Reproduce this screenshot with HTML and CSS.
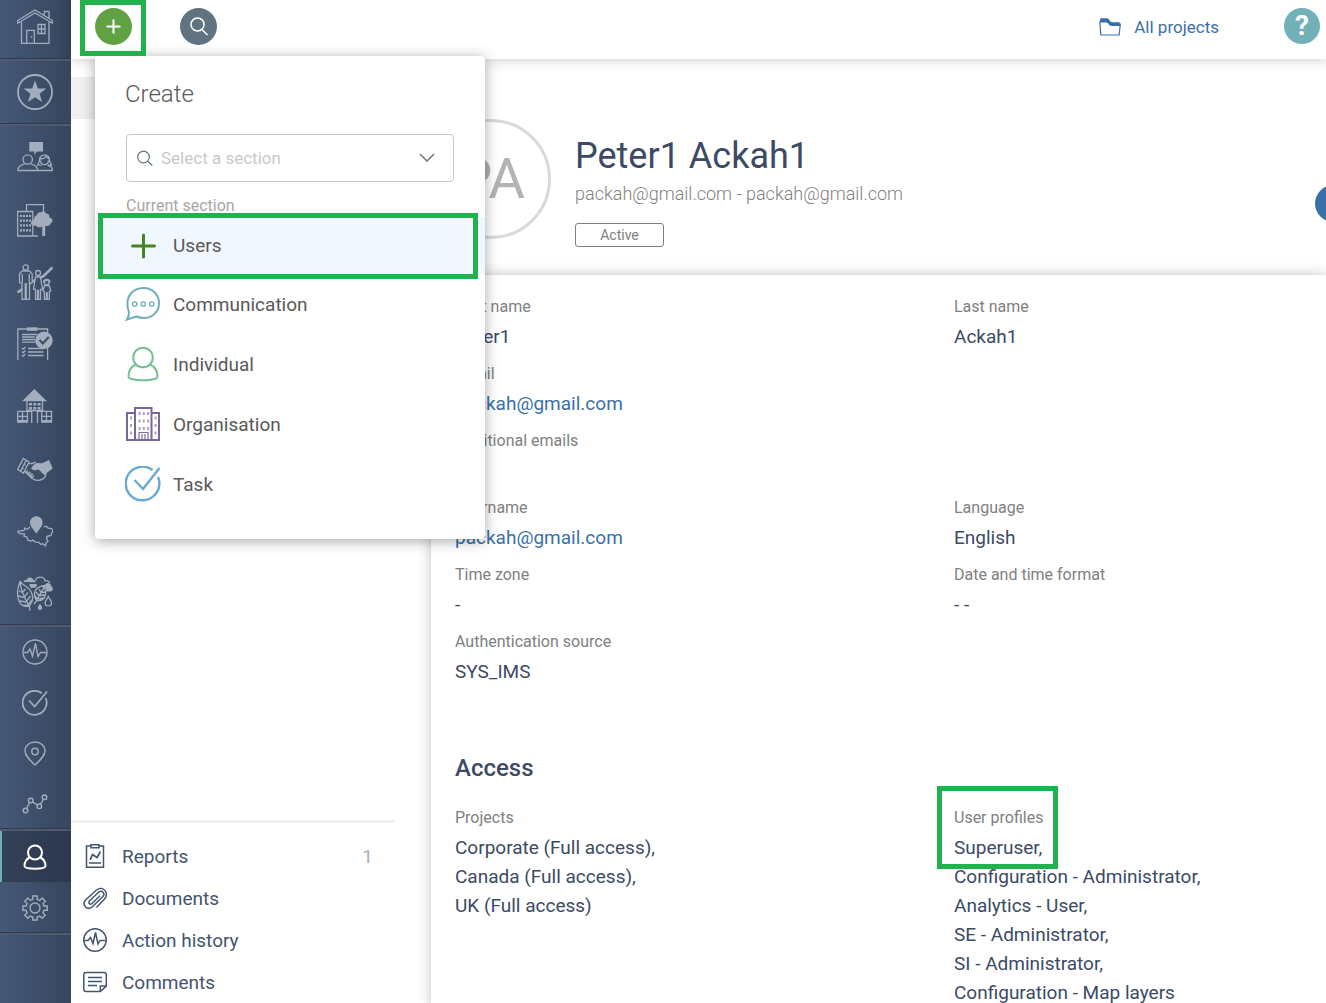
FILE: index.html
```html
<!DOCTYPE html>
<html lang="en">
<head>
    <meta charset="UTF-8">
    <meta name="viewport" content="width=device-width, initial-scale=1.0">
    <title>Peter1 Ackah1</title>
    <link rel="stylesheet" href="styles.css">
</head>
<body>
    <nav class="sidebar">
        <div class="nav-group home">
            <a href="#" aria-label="Home">
                <svg class="icon" viewBox="0 0 36 36">
                    <path d="M.7 12.5 18 2l17.3 10.5v2.7L18 5 .7 15.2zM4.5 14v21.3H32V14M27.3 7V3.500H32V10M9.7 35V22.300h7.600V35M14.500 28v1.500"/>
                    <path d="M21 16.500h7v9h-7zM24.500 16.500v9M21 21h7"/>
                </svg>
            </a>
        </div>
        <div class="nav-group favourites">
            <a href="#" aria-label="Favourites">
                <svg class="icon" viewBox="0 0 36 36">
                    <circle cx="18" cy="18" r="17" stroke-width="1.8"/>
                    <path class="solid" d="m18 6.500 2.900 7.900 8.400.2-6.700 5.200 2.500 8.200-7.100-4.800-7.100 4.800 2.500-8.200-6.700-5.200 8.400-.2z"/>
                </svg>
            </a>
        </div>
        <div class="nav-group sections">
            <a href="#" aria-label="Consultations">
                <svg class="icon" viewBox="0 0 36 36">
                    <path class="solid" d="M12.300 3H26v9.500h-6L17.300 16v-3.500h-5z"/>
                    <circle cx="10.700" cy="20.500" r="4.700"/>
                    <path d="M.5 31.500h35M.7 31.500c.2-4.500 3-5.500 6.800-6.300M14 25.200c3.800.8 6.500 2 6.800 6.300M22.500 21c0-6.500 10-6.500 10 0M23 20c3 0 5-1 6.500-2.500 1 1.500 2 2.300 3 2.500M23.500 21.500c.5 5.500 7.500 5.500 8 0M22.500 21c0 2-1 3.500-2 5l4 .2M32.500 21c0 2 1 3.500 2 5l-4 .2M31 26.500c3 .6 4.500 2 4.500 5"/>
                </svg>
            </a>
            <a href="#" aria-label="Environment">
                <svg class="icon" viewBox="0 0 36 36">
                    <path d="M9.500 9.500V2.700h17v7M.6 9.500h15.200V34H.6zM.6 34H21"/>
                    <path d="M3 14h11M3 18.600h11M3 23.300h11M3 28.300h11" stroke-width="2.2" stroke-dasharray="2 1"/>
                    <path class="solid" d="M20 13c0-2.500 2.800-3.200 4.200-2.500 1.200-2.500 4.800-1.200 4.600 1 2.800-.5 4 2 3.500 4 3.800.5 4.300 4.500 1.500 5.600-.5 2.800-3.500 3.600-5.600 2.600V34h-3V24.500c-2 1.500-5.500 1-6-1-3 .7-5.600-.8-5.200-3 .3-1.700 1.800-2.300 3-2.200-.2-2.800 1.200-4.800 3-5.300z"/>
                </svg>
            </a>
            <a href="#" aria-label="Community">
                <svg class="icon" viewBox="0 0 36 36">
                    <path d="M.5 28.500 14 18.800M14.500 18l11.500-5.500L35.500 3.500" stroke-width="2.6"/>
                    <g class="cutout">
                        <circle cx="8.700" cy="3.500" r="2.600"/>
                        <path d="M5 7h7.500l2.700 3v8.500l-2.700 1V35.300H9.300V20H8.200v15.300H5V19.500l-2.500-1V10z"/>
                        <circle cx="21" cy="9" r="2.500"/>
                        <path d="M18.500 13h5l1.500 9 .5 3-2 .5v10h-2v-9h-1v9h-2v-10l-2-.5.500-3z"/>
                        <circle cx="29.700" cy="18.500" r="2.300"/>
                        <path d="M27.500 21.700h4.700l1.600 5-1.500 1v7.600h-2V29h-1v6.300h-2v-7.600l-1.400-1z"/>
                    </g>
                    <path d="M26.500 18.500c0-4 6.500-4 6.500 0M5.300 10v9M12.200 10v9"/>
                </svg>
            </a>
            <a href="#" aria-label="Compliance">
                <svg class="icon" viewBox="0 0 36 36">
                    <path d="M.8 34V3h29.800v31"/>
                    <path class="solid" d="M10 1.300h10.500v3.500H10z"/>
                    <path d="M5 8.500h15M5 11h13M5 13.500h13M5 16.200h14M11 22.500h15.500M11 26h15.500M11 29.500h15.500M5 22l1.200 1.200L8.500 21M5 25.500l1.200 1.200L8.500 24.500M5 29l1.200 1.200L8.500 28"/>
                    <circle class="solid" cx="27" cy="14.300" r="8.700"/>
                    <path class="dark" d="m22.500 14 3.300 3.500 6-6.500"/>
                </svg>
            </a>
            <a href="#" aria-label="Resettlement">
                <svg class="icon" viewBox="0 0 36 36">
                    <path class="solid" d="M17.300 0 30 12.300H5z"/>
                    <path d="M10 12v9.500h15.500V12M.7 22.300h14V34M.7 22.300V33h9.800V22.300M20.500 34V22.300h14V33h-9.800V22.300"/>
                    <path d="M1 27.300h9.500M5.500 22.300v10M24.500 27.300h10M29.500 22.300v10"/>
                    <path d="M12 15.300h12M12 19.300h12" stroke-width="2.6" stroke-dasharray="3 1.300"/>
                    <path d="M1 32h9M25 32h9.500" stroke-width="2"/>
                </svg>
            </a>
            <a href="#" aria-label="Agreements">
                <svg class="icon" viewBox="0 0 36 36">
                    <path d="M6.300 7.500 12 11 6.500 22 .6 18.500zM9 9.500 3.700 20M7 13.500l1.500 1M5 17l1.500 1M12 12.500c2.500.8 4.500-.5 7-1.500M8 20.500l7 7M11 19.500c-1.500 1-2.500 2.500-1 3.300l1.500-1.700M13.500 21c-1.500 1-2.500 3-1 3.500l2-2M16 23c-1.500 1-2.500 3-1 3.800l2-2M15.500 27.500c3 2.500 5 2 7.500 1.500 3-.5 5-2 6-5.500"/>
                    <path class="solid" d="M14 17.500c2-3 3.500-5 6-5.500l5 .3 7-3.300 3.700 8.500-5.500 4-2 3c-2-1-4-4-6.500-6-2.500 1-5 1.500-7.700-1z"/>
                </svg>
            </a>
            <a href="#" aria-label="Territories">
                <svg class="icon" viewBox="0 0 36 36">
                    <path class="solid" d="M19.300 20.500c-3-4.500-6.300-7-6.300-11a6.300 6.300 0 0 1 12.600 0c0 4-3.300 6.500-6.300 11z"/>
                    <path d="m13 14-3 2.500-2-1.500-1 2.500-6.400.8 1.500 2 5.400.8-.5 2 3 1 1 3 3.500 1 1-1 3.500 2 3 .2 1.500 2 2-.5 3 2 .5-3 2-1.500-1.500-3 .5-2 4-.8.500-2 1.700-3-1.500-2-3.500-.3-2-2-2.500.8"/>
                </svg>
            </a>
            <a href="#" aria-label="Biodiversity">
                <svg class="icon" viewBox="0 0 36 36">
                    <path d="M3 5.500C.5 12-.5 20 2.500 26c2 4 6 5 9.800 4C16.500 25 16.500 19 13 14 10.500 10.500 6 9.500 3 5.500zM3 6c1 10 5 17 9.300 24l.8 4.700M2 15l3.500 1.500L8.500 13M1.500 20l5.500 1.500 4-5M2.500 25l6.500 1 4.500-6M6 29.500l5-.5 3.700-5"/>
                    <path d="M28 9.500c-5 .5-10 3-10.500 8-.3 3 .5 5 2.500 7 4.500.5 7.500-2 8.500-6 .7-3.500-1.500-5.500-.5-9zM27.500 10c-2 5-6 10-7.500 14l-3 4M19 16l3 3.500 5.500-.5M22 13l2 3.500 4-.5M18 20l2.500 3 5.500-1"/>
                    <path class="solid" d="M6.500 6c.5-2 2-2.300 3-2 1-3.500 6-3.500 7 0 1.500 0 2.300 1 2 2.300zM28 10c0-4 6-4 6 0 2.500 1 2.500 5-.3 5.500H29c1-2-.5-3-1-5.500zM12 8h8l-1 3.500-5 .5z"/>
                    <path d="M18.500 4.500c1-4.500 9-4.500 9.500.5 2-1 4 0 4.500 2"/>
                    <path class="solid" d="M23 27.500c1 2 2.200 3 2.200 4.300a2.200 2.200 0 0 1-4.400 0c0-1.300 1.200-2.300 2.200-4.300z"/>
                    <path d="M31.300 20.500c1.500 3 3.200 4.500 3.200 6.200a3.200 3.200 0 0 1-6.400 0c0-1.700 1.700-3.200 3.200-6.200z"/>
                </svg>
            </a>
        </div>
        <div class="nav-group tools">
            <a href="#" aria-label="Actions">
                <svg class="icon small" viewBox="0 0 26 26">
                    <circle cx="13" cy="13" r="12"/>
                    <path d="M2 13.500h3.500L8 10l2.500 7 3-12.500 2.500 13 2.500-4H24"/>
                </svg>
            </a>
            <a href="#" aria-label="Tasks">
                <svg class="icon small" viewBox="0 0 26 26">
                    <path d="M19.800 3.200A12 12 0 1 0 23.600 8M7 10.500l5.700 6L25 1.500" stroke-width="1.8"/>
                </svg>
            </a>
            <a href="#" aria-label="Locations">
                <svg class="icon small" viewBox="0 0 26 26">
                    <path d="M13 25C8 20.500 3 16 3 10.800 3 5.500 7.500 2 13 2s10 3.500 10 8.800C23 16 18 20.500 13 25z"/>
                    <circle cx="13" cy="11.500" r="3.200"/>
                </svg>
            </a>
            <a href="#" aria-label="Analytics">
                <svg class="icon small" viewBox="0 0 26 26">
                    <circle cx="3.500" cy="19.500" r="2.300"/>
                    <circle cx="8.700" cy="9.500" r="2.300"/>
                    <circle cx="17.300" cy="15.300" r="2.300"/>
                    <circle cx="22.500" cy="6.300" r="2.300"/>
                    <path d="m4.600 17.500 3-6M10.700 10.800l4.700 3.200M18.500 13.300l2.900-5"/>
                </svg>
            </a>
        </div>
        <div class="nav-group admin">
            <a href="#" class="active" aria-label="Users">
                <svg class="icon small" viewBox="0 0 26 26">
                    <circle cx="13" cy="8.500" r="7"/>
                    <path d="M7.800 13.500C4.500 15 2.500 18 2.500 22c0 3.500 21 3.500 21 0 0-4-2-7-5.300-8.500"/>
                </svg>
            </a>
            <a href="#" aria-label="Settings">
                <svg class="icon small" viewBox="0 0 26 26">
                    <circle cx="13" cy="13" r="5"/>
                    <path d="M10.800 1h4.400v3.300l2.600 1.100 2.400-2.300 3.100 3.100L21 8.600l1 2.400h3.200v4.300H22l-1.100 2.600 2.300 2.300-3.100 3.100-2.300-2.300-2.600 1V25h-4.400v-3L8.200 21l-2.300 2.300-3.100-3.100 2.300-2.300L4 15.300H.9V11H4l1.100-2.400-2.300-2.400 3.100-3.100 2.300 2.300 2.600-1.100z"/>
                </svg>
            </a>
        </div>
    </nav>

    <div class="page">
        <header class="topbar">
            <div class="create">
                <button class="round add" aria-label="Create">
                    <svg viewBox="0 0 37 37"><path d="M11.500 18.500h14M18.500 11.500v14"/></svg>
                </button>

                <!-- Create menu, opened by the plus button -->
                <div class="create-menu">
                    <h2>Create</h2>
                    <div class="section-select">
                        <svg class="lens" viewBox="0 0 16 16"><circle cx="6.500" cy="7" r="5.800"/><path d="m10.700 11.200 4.600 4.300"/></svg>
                        <input type="text" aria-label="Select a section" placeholder="Select a section">
                        <button class="chevron" aria-label="Show sections">
                            <svg viewBox="0 0 16 10"><path d="m1 1 7 7 7-7"/></svg>
                        </button>
                    </div>
                    <p class="caption">Current section</p>
                    <ul>
                        <li class="current">
                            <a href="#">
                                <svg class="users" viewBox="0 0 36 36"><path d="M7.500 18h22M18.500 7v22"/></svg>
                                Users
                            </a>
                        </li>
                        <li>
                            <a href="#">
                                <svg class="communication" viewBox="0 0 36 36">
                                    <path d="M2 33.500c2-3.500 2.500-6 1.500-9C-.5 11 7.500 2 18.500 2 28 2 34 9 34 17.300c0 12-12 17.500-22.500 13.200z"/>
                                    <g stroke-width="1.3"><circle cx="9.700" cy="18" r="2.200"/><circle cx="18.300" cy="18" r="2.200"/><circle cx="26.700" cy="18" r="2.200"/></g>
                                </svg>
                                Communication
                            </a>
                        </li>
                        <li>
                            <a href="#">
                                <svg class="individual" viewBox="0 0 36 36">
                                    <circle cx="18" cy="11.500" r="9.800"/>
                                    <path d="M11 18.500C6.500 20.500 3.500 25 3.500 30.500c0 5 29 5 29 0 0-5.500-3-10-7.500-12"/>
                                </svg>
                                Individual
                            </a>
                        </li>
                        <li>
                            <a href="#">
                                <svg class="organisation" viewBox="0 0 36 36">
                                    <path d="M2 7h8v27H2zM26.500 7H34v27h-7.500zM10 2h16.500v32H10z"/>
                                    <path d="M14 26.500h9V34M14 26.500V34M17 28v6M20 28v6" stroke-width="1.2"/>
                                    <path d="M13.500 7.500h11M13.500 15h11M13.500 22.500h11M5 12h2M5 19.500h2M5 27h2M29.500 12h2M29.500 19.500h2M29.500 27h2" stroke-width="3" stroke-dasharray="2 2.300" opacity=".6"/>
                                </svg>
                                Organisation
                            </a>
                        </li>
                        <li>
                            <a href="#">
                                <svg class="task" viewBox="0 0 36 36">
                                    <path d="M27.500 4A16.800 16.800 0 1 0 33 11M9.500 14l8.500 9L34.500 2"/>
                                </svg>
                                Task
                            </a>
                        </li>
                    </ul>
                </div>
            </div>
            <button class="round search" aria-label="Search">
                <svg viewBox="0 0 37 37"><circle cx="17.500" cy="16.500" r="6.500"/><path d="m22 21.500 5.500 5.500"/></svg>
            </button>
            <a href="#" class="projects">
                <svg viewBox="0 0 22 18">
                    <path d="M.8 3.500 1.800 17h18.400l1.100-11.500"/>
                    <path class="fill" d="M1.500.3h6.800c2 0 2.500 4 5 4h7.200l1.200 3.700h-8.500C9.500 8 9.500 4.500 7.500 4.500H.7z"/>
                </svg>
                All projects
            </a>
            <button class="round help" aria-label="Help">?</button>
        </header>

        <div class="content">
            <aside class="panel">
                <div class="panel-tab"></div>
                <ul class="panel-links">
                    <li>
                        <a href="#">
                            <svg viewBox="0 0 24 24"><path d="M8 2H3.500v21.300h17V2H16M8 .8h8v3H8zM6 19h12"/><path d="m7.500 15 2-4.500 4.500 3L17 8.500" stroke-width="1.8"/><path d="M6.700 15.200h1.500M16.300 8h1.500"/></svg>
                            Reports
                            <span class="count">1</span>
                        </a>
                    </li>
                    <li>
                        <a href="#">
                            <svg viewBox="0 0 24 24"><path d="m13.500 21.500 8-8.500c5-6-1.500-14-8-9L2.500 14C-1.500 18.500 4 25 9 21L20 10.500c2.500-3-1-7-4.500-4.200L6.500 15c-1.700 2.200.8 4 2.500 2.500L17 9.800"/></svg>
                            Documents
                        </a>
                    </li>
                    <li>
                        <a href="#">
                            <svg viewBox="0 0 24 24"><circle cx="12" cy="12" r="11.200"/><path d="M1.500 12.500H5L7.500 9.500l2.500 6L12.500 4.500 15 16l2-3.500h5.500"/></svg>
                            Action history
                        </a>
                    </li>
                    <li>
                        <a href="#">
                            <svg viewBox="0 0 24 24"><path d="M3 2.500h18c1.500 0 2.300 1 2.300 2.300V16l-6 5.500H3C1.500 21.500.8 20.500.8 19.200V4.800C.8 3.500 1.500 2.500 3 2.500zM17.300 21.500V16h6M5 7.500h14M5 11.500h14M5 15.500h9"/></svg>
                            Comments
                        </a>
                    </li>
                </ul>
            </aside>

            <main>
                <section class="profile">
                    <div class="avatar">PA</div>
                    <div class="profile-text">
                        <h1>Peter1 Ackah1</h1>
                        <p>packah@gmail.com - packah@gmail.com</p>
                        <span class="badge">Active</span>
                    </div>
                    <button class="round edit" aria-label="Edit"></button>
                </section>

                <section class="card">
                    <div class="fields">
                        <div class="field left">
                            <div class="label">First name</div>
                            <div class="value">Peter1</div>
                        </div>
                        <div class="field">
                            <div class="label">Last name</div>
                            <div class="value">Ackah1</div>
                        </div>
                        <div class="field left">
                            <div class="label">Email</div>
                            <div class="value"><a href="#">packah@gmail.com</a></div>
                        </div>
                        <div class="field left">
                            <div class="label">Additional emails</div>
                            <div class="value"></div>
                        </div>
                        <div class="field left">
                            <div class="label">Username</div>
                            <div class="value"><a href="#">packah@gmail.com</a></div>
                        </div>
                        <div class="field">
                            <div class="label">Language</div>
                            <div class="value">English</div>
                        </div>
                        <div class="field left">
                            <div class="label">Time zone</div>
                            <div class="value">-</div>
                        </div>
                        <div class="field">
                            <div class="label">Date and time format</div>
                            <div class="value">- -</div>
                        </div>
                        <div class="field left">
                            <div class="label">Authentication source</div>
                            <div class="value">SYS_IMS</div>
                        </div>
                    </div>

                    <h3>Access</h3>
                    <div class="fields">
                        <div class="field left">
                            <div class="label">Projects</div>
                            <div class="value">Corporate (Full access),<br>Canada (Full access),<br>UK (Full access)</div>
                        </div>
                        <div class="field profiles">
                            <div class="label">User profiles</div>
                            <div class="value">Superuser,<br>Configuration - Administrator,<br>Analytics - User,<br>SE - Administrator,<br>SI - Administrator,<br>Configuration - Map layers</div>
                        </div>
                    </div>
                </section>
            </main>
        </div>
    </div>
</body>
</html>
```

FILE: styles.css
```css
*,
*::after {
    box-sizing: border-box;
}

body {
    margin: 0;
    height: 100vh;
    display: flex;
    overflow: hidden;
    background: #fff;
    color: #3b4a65;
    font-family: Roboto, "Liberation Sans", sans-serif;
    font-size: 19px;
}

h1, h2, h3, p, ul {
    margin: 0;
    padding: 0;
}

ul {
    list-style: none;
}

a {
    color: #3970a8;
    text-decoration: none;
}

button {
    padding: 0;
    border: none;
    background: none;
    cursor: pointer;
}

svg {
    display: block;
    flex: none;
    fill: none;
    stroke: currentColor;
    stroke-width: 1.5;
}

/* Sidebar */
.sidebar {
    flex: 0 0 71px;
    background: linear-gradient(to right, #465877, #36465e);
}

.nav-group {
    display: flex;
    flex-direction: column;
    border-bottom: 2px solid #4f5a6c;
    box-shadow: inset 0 -1px 0 #2f3b50;
}

.nav-group a {
    flex: 1;
    display: flex;
    align-items: center;
    justify-content: center;
    padding-right: 1px;
    color: #a3adbc;
}

.home {
    height: 61px;
    padding-bottom: 7px;
}

.favourites {
    height: 65px;
    padding-bottom: 1px;
}

.sections {
    height: 501px;
}

.tools {
    height: 204px;
}

.admin {
    height: 104px;
}

.nav-group a.active {
    background: linear-gradient(to right, #344157, #2d384e);
    box-shadow: inset 2px 0 0 #6fb0b8;
    color: #fff;
}

.icon {
    width: 36px;
    height: 36px;
    stroke-width: 1.3;
}

.icon.small {
    width: 26px;
    height: 26px;
    stroke-width: 1.4;
}

.active .icon.small {
    stroke-width: 2;
}

.solid {
    fill: currentColor;
    stroke: none;
}

.cutout {
    fill: #3f506c;
}

.dark {
    stroke: #3f4f6a;
    stroke-width: 2.2;
}

/* Top bar */
.page {
    flex: 1;
    min-width: 0;
    display: flex;
    flex-direction: column;
}

.topbar {
    position: relative;
    z-index: 2;
    flex: none;
    height: 59px;
    display: flex;
    align-items: center;
    padding: 0 6px 6px 24px;
    background: #fff;
    box-shadow: 0 1px 12px rgba(0, 0, 0, 0.2);
}

.round {
    flex: none;
    display: block;
    width: 37px;
    height: 37px;
    border-radius: 50%;
    color: #fff;
}

.add {
    background: #5fa143;
}

.add svg {
    stroke-width: 2;
}

.search {
    margin-left: 48px;
    background: #5f7480;
}

.projects {
    display: flex;
    align-items: center;
    gap: 13px;
    margin-left: auto;
    font-size: 17px;
}

.projects svg {
    width: 22px;
    height: 18px;
    stroke-width: 1.2;
}

.projects .fill {
    fill: currentColor;
    stroke: none;
}

.help {
    width: 36px;
    height: 36px;
    margin: 0 0 2px 65px;
    background: #72b0b8;
    font: 700 28px/36px Roboto, sans-serif;
}

/* Create menu */
.create {
    position: relative;
}

.create::after,
.current::after,
.profiles::after {
    content: "";
    position: absolute;
    border: 5px solid #22b14c;
    pointer-events: none;
}

.create::after {
    top: -8px;
    left: -15px;
    width: 66px;
    height: 56px;
}

.create-menu {
    position: absolute;
    top: 48px;
    left: 0;
    width: 390px;
    padding: 20px 0 25px;
    background: #fff;
    border-radius: 4px;
    box-shadow: 0 2px 14px rgba(0, 0, 0, 0.35);
    color: #595959;
}

.create-menu h2 {
    padding-left: 30px;
    font-size: 24px;
    font-weight: 300;
    line-height: 36px;
}

.section-select {
    display: flex;
    align-items: center;
    height: 48px;
    margin: 22px 31px 0;
    padding: 0 18px 0 10px;
    border: 1px solid #c8c8c8;
    border-radius: 4px;
}

.lens {
    width: 16px;
    height: 16px;
    color: #5f7480;
    stroke-width: 1.2;
}

.section-select input {
    flex: 1;
    min-width: 0;
    padding: 0 8px;
    border: none;
    outline: none;
    background: none;
    font: 17px/24px Roboto, sans-serif;
}

.section-select input::placeholder {
    color: #c8c8c8;
}

.chevron svg {
    width: 16px;
    height: 10px;
    color: #808080;
    stroke-width: 1.7;
}

.caption {
    padding: 12px 31px 0;
    color: #a6a6a6;
    font-size: 16px;
    line-height: 23px;
}

.create-menu li {
    position: relative;
    height: 60px;
}

.create-menu li a {
    height: 100%;
    display: flex;
    align-items: center;
    gap: 12px;
    padding-left: 30px;
    color: #595959;
}

.create-menu li svg {
    width: 36px;
    height: 36px;
    stroke-width: 2;
}

.create-menu .current {
    height: 57px;
    background: #f0f7ff;
}

.current::after {
    top: -4px;
    left: 3px;
    right: 7px;
    height: 66px;
    z-index: 1;
}

.create-menu li .users {
    color: #43861f;
    stroke-width: 3;
    stroke-linecap: round;
}

.communication {
    color: #6fafb9;
}

.individual {
    color: #76c095;
}

.organisation {
    color: #78689a;
}

.create-menu li .task {
    color: #6aa8d4;
    stroke-width: 2.4;
}

/* Left panel */
.content {
    flex: 1;
    min-height: 0;
    display: flex;
}

.panel {
    flex: 0 0 360px;
    display: flex;
    flex-direction: column;
    padding-right: 36px;
}

.panel-tab {
    height: 42px;
    margin-top: 18px;
    background: #f0f0f0;
}

.panel-links {
    margin-top: auto;
    padding-top: 12px;
    border-top: 3px solid #f1f1f1;
}

.panel-links a {
    display: flex;
    align-items: center;
    gap: 15px;
    height: 42px;
    padding: 0 22px 0 12px;
    color: #44546f;
}

.panel-links svg {
    width: 24px;
    height: 24px;
}

.count {
    margin-left: auto;
    color: #b0b0b0;
}

/* Profile header */
main {
    flex: 1;
    min-width: 0;
    display: flex;
    flex-direction: column;
}

.profile {
    flex: none;
    height: 216px;
    display: flex;
    padding-top: 60px;
}

.avatar {
    flex: none;
    width: 120px;
    height: 120px;
    border: 3px solid #d9d9d9;
    border-radius: 50%;
    color: #b3b3b3;
    font-size: 56px;
    line-height: 115px;
    text-align: center;
}

.profile-text {
    padding: 15px 0 0 24px;
}

.profile-text h1 {
    font-size: 36px;
    font-weight: 400;
    line-height: 44px;
}

.profile-text p {
    margin: 4px 0 17px;
    color: #7f7f7f;
    font-size: 18px;
    font-weight: 300;
    line-height: 24px;
}

.badge {
    display: block;
    width: 89px;
    border: 1px solid #808080;
    border-radius: 3px;
    color: #808080;
    font-size: 14px;
    line-height: 22px;
    text-align: center;
}

/* Sits half outside the right edge */
.edit {
    margin: 66px -26px 0 auto;
    background: #3970a8;
}

/* Details card */
.card {
    flex: 1;
    padding: 17px 0 0 24px;
    background: #fff;
    box-shadow: 0 0 12px rgba(0, 0, 0, 0.25);
}

.fields {
    display: grid;
    grid-template-columns: 4fr 3fr;
    gap: 7px 3px;
}

.field {
    position: relative;
}

.left {
    grid-column: 1;
}

.label {
    color: #808080;
    font-size: 16px;
    line-height: 30px;
}

.value {
    min-height: 30px;
    line-height: 29px;
}

.card h3 {
    margin: 65px 0 19px;
    font-size: 24px;
    font-weight: 500;
    line-height: 32px;
}

.profiles::after {
    top: -17px;
    left: -17px;
    width: 121px;
    height: 83px;
}
```
